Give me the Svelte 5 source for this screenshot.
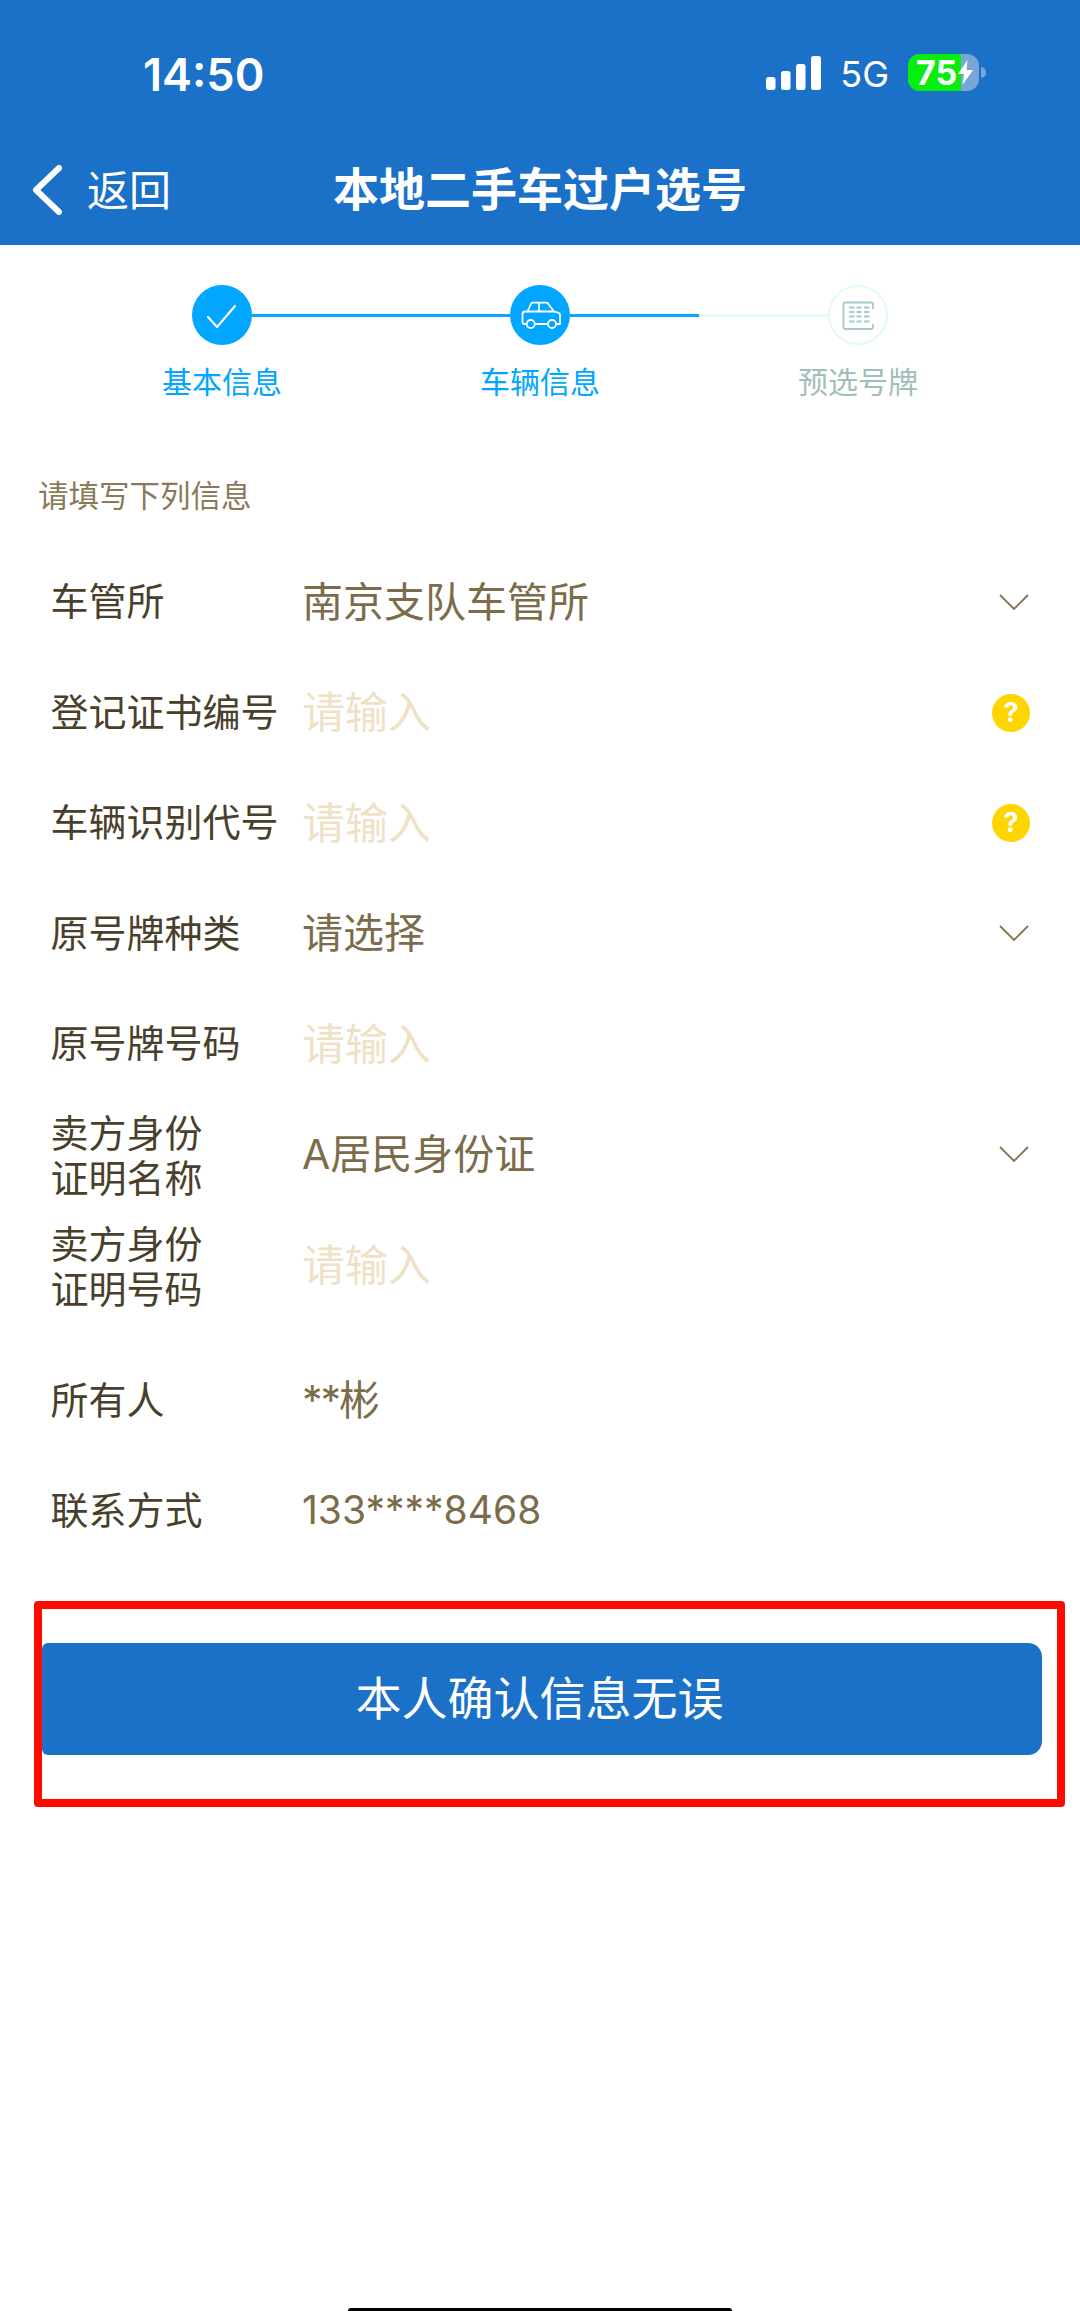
<script>
  const rows = [
    { label: ['车管所'], value: '南京支队车管所', icon: 'chevron' },
    { label: ['登记证书编号'], placeholder: '请输入', icon: 'help' },
    { label: ['车辆识别代号'], placeholder: '请输入', icon: 'help' },
    { label: ['原号牌种类'], value: '请选择', icon: 'chevron' },
    { label: ['原号牌号码'], placeholder: '请输入' },
    { label: ['卖方身份', '证明名称'], value: 'A居民身份证', icon: 'chevron' },
    { label: ['卖方身份', '证明号码'], placeholder: '请输入' },
    { label: ['所有人'], value: '**彬', kind: 'mask', spaced: true },
    { label: ['联系方式'], value: '133****8468', kind: 'num' }
  ];
</script>

<div class="page">
  <header>
    <div class="status">
      <span class="time">14:50</span>
      <div class="indicators">
        <svg class="signal" width="55" height="34" viewBox="0 0 55 34" fill="#fff">
          <rect x="0" y="21" width="9.5" height="13" rx="2.5" />
          <rect x="15" y="15" width="9.5" height="19" rx="2.5" />
          <rect x="30" y="8" width="9.5" height="26" rx="2.5" />
          <rect x="45" y="0" width="10" height="34" rx="2.5" />
        </svg>
        <span class="net">5G</span>
        <div class="battery">
          <div class="cell">
            <div class="charge">75</div>
            <svg class="bolt" width="15" height="25" viewBox="0 0 15 25" fill="#fff">
              <path d="M9.5 0 0 14h6L4.500 25 15 10H8.500z" />
            </svg>
          </div>
          <div class="nub"></div>
        </div>
      </div>
    </div>
    <div class="nav">
      <div class="back">
        <svg width="30" height="50" viewBox="0 0 30 50" fill="none" stroke="#fff" stroke-width="6" stroke-linecap="round" stroke-linejoin="round">
          <path d="M27 3 4 25l23 22" />
        </svg>
        <span>返回</span>
      </div>
      <h1>本地二手车过户选号</h1>
      <div></div>
    </div>
  </header>

  <div class="steps">
    <div class="step">
      <div class="head">
        <i class="line none"></i>
        <div class="dot on">
          <svg width="60" height="60" viewBox="0 0 60 60" fill="none" stroke="#fff" stroke-width="2.200" stroke-linecap="round" stroke-linejoin="round">
            <path d="M16 32l9 10 18-21" />
          </svg>
        </div>
        <i class="line blue"></i>
      </div>
      <span class="name">基本信息</span>
    </div>
    <div class="step">
      <div class="head">
        <i class="line blue"></i>
        <div class="dot on">
          <svg width="60" height="60" viewBox="0 0 60 60" fill="none" stroke="#fff" stroke-width="1.800" stroke-linecap="round" stroke-linejoin="round">
            <path d="M16.500 39H14a1.500 1.500 0 0 1-1.500-1.500V29a2.500 2.500 0 0 1 2.500-2.500h2.500L21 18.800a2 2 0 0 1 1.800-1.100h13.500a2 2 0 0 1 1.600.8L44 26.500l4 1.200a2.500 2.500 0 0 1 2 2.400V39h-3.500M25 39h12.500" />
            <path d="M17.500 26.500H44M29 17.700v8.800" />
            <circle cx="20.700" cy="39" r="4" />
            <circle cx="42" cy="39" r="4" />
          </svg>
        </div>
        <i class="line blue"></i>
      </div>
      <span class="name">车辆信息</span>
    </div>
    <div class="step todo">
      <div class="head">
        <i class="line pale"></i>
        <div class="dot off">
          <svg width="56" height="56" viewBox="0 0 56 56" fill="none" stroke="#a6c9cd" stroke-width="1.800">
            <path d="M43 22V17.500a2 2 0 0 0-2-2H15a2 2 0 0 0-1.500 1.500v23a2 2 0 0 0 2 2H41a2 2 0 0 0 2-2V37" />
            <path d="M19 20.500h5.500M26.500 20.500h5M34 20.500h5.500M19 25h5.500M26.500 25h5M34 25h5.500M19 29.500h5.500M26.500 29.500h5M34 29.500h5.500M19 34.500h5.500M26.500 34.500h5M34 34.500h5.500" />
          </svg>
        </div>
        <i class="line none"></i>
      </div>
      <span class="name">预选号牌</span>
    </div>
  </div>

  <p class="hint">请填写下列信息</p>

  <div class="form">
    {#each rows as row}
      <div class="row" class:spaced={row.spaced}>
        <div class="label" class:double={row.label.length > 1}>
          {#each row.label as line}
            <span>{line}</span>
          {/each}
        </div>
        {#if row.value}
          <div class="value {row.kind ?? ''}">{row.value}</div>
        {:else}
          <div class="value placeholder">{row.placeholder}</div>
        {/if}
        <div class="tail">
          {#if row.icon === 'chevron'}
            <svg width="30" height="17" viewBox="0 0 30 17" fill="none" stroke="#85754f" stroke-width="1.800">
              <path d="M1 1l14 14L29 1" />
            </svg>
          {:else if row.icon === 'help'}
            <span class="help">?</span>
          {/if}
        </div>
      </div>
    {/each}
  </div>

  <div class="marked">
    <button>本人确认信息无误</button>
  </div>

  <div class="home"></div>
</div>

<style>
  :global(body) {
    margin: 0;
    background: #fff;
  }
  .page {
    position: relative;
    height: 2311px;
    overflow: hidden;
    background: #fff;
    font-family: "Noto Sans CJK SC", "Noto Sans", sans-serif;
  }
  header {
    height: 245px;
    background: #1b70c8;
    color: #fff;
  }
  .status {
    height: 148px;
    padding: 0 94px 0 143px;
    display: flex;
    align-items: center;
    justify-content: space-between;
  }
  .time {
    font: 600 45px/1 Inter, sans-serif;
  }
  .indicators {
    display: flex;
    align-items: center;
  }
  .signal {
    display: block;
    margin-right: 19px;
    margin-bottom: 3px;
  }
  .net {
    font: 400 36px/1 Inter, sans-serif;
    margin-right: 19px;
  }
  .battery {
    display: flex;
    align-items: center;
    gap: 2px;
    margin-bottom: 3px;
  }
  .cell {
    position: relative;
    width: 71px;
    height: 37px;
    border-radius: 12px;
    background: #79a6d8;
  }
  .charge {
    width: 53px;
    height: 37px;
    padding-left: 8px;
    box-sizing: border-box;
    border-radius: 12px 0 0 12px;
    background: #07ee0c;
    font: 700 34px/37px Inter, sans-serif;
  }
  .bolt {
    position: absolute;
    left: 50px;
    top: 6px;
  }
  .nub {
    width: 5px;
    height: 11px;
    border-radius: 0 6px 6px 0;
    background: #79a6d8;
  }
  .nav {
    height: 84px;
    display: grid;
    grid-template-columns: 1fr auto 1fr;
    align-items: center;
  }
  .back {
    display: flex;
    align-items: center;
    gap: 25px;
    padding-left: 32px;
    font-size: 42px;
  }
  .back svg {
    display: block;
  }
  .back span {
    padding-bottom: 5px;
  }
  h1 {
    margin: 0;
    padding-bottom: 8px;
    font-size: 46px;
    font-weight: 700;
    line-height: 60px;
  }
  .steps {
    display: grid;
    grid-template-columns: repeat(3, 318px);
    padding: 40px 63px 0;
  }
  .step {
    display: flex;
    flex-direction: column;
    align-items: center;
    color: #00a6ff;
  }
  .step.todo {
    color: #9fbfba;
  }
  .head {
    width: 100%;
    display: flex;
    align-items: center;
  }
  .line {
    flex: 1;
    height: 3px;
  }
  .line.blue {
    background: #0aa6ff;
  }
  .line.pale {
    background: #e3faf5;
  }
  .dot {
    width: 60px;
    height: 60px;
    box-sizing: border-box;
    border-radius: 50%;
    flex: none;
  }
  .dot svg {
    display: block;
  }
  .dot.on {
    background: #00a6ff;
  }
  .dot.off {
    border: 2px solid #e3faf5;
  }
  .name {
    margin-top: 15px;
    margin-bottom: 5px;
    font-size: 30px;
    line-height: 40px;
  }
  .hint {
    margin: 69px 0 32px 38px;
    font-size: 30.5px;
    line-height: 40px;
    color: #8a7a58;
  }
  .row {
    height: 110.5px;
    display: flex;
    align-items: center;
    padding: 0 50px 0 50.5px;
  }
  .row.spaced {
    margin-top: 25px;
  }
  .label {
    width: 251.5px;
    flex: none;
    margin-bottom: 5px;
    font-size: 38px;
    line-height: 45px;
    color: #493f2b;
  }
  .label.double {
    margin-bottom: 1px;
  }
  .label span {
    display: block;
  }
  .value {
    flex: 1;
    margin-bottom: 5px;
    font-family: Inter, "Noto Sans CJK SC", sans-serif;
    font-size: 41px;
    color: #7c6c4a;
  }
  .value.num {
    font-size: 39px;
    margin-bottom: 1px;
  }
  .value.mask {
    letter-spacing: -2px;
  }
  .placeholder {
    font-size: 43px;
    color: #efe1c6;
  }
  .tail {
    width: 38px;
    margin-top: 2px;
    display: flex;
    justify-content: flex-end;
  }
  .tail svg {
    display: block;
    margin-right: 1px;
  }
  .help {
    width: 38px;
    height: 38px;
    border-radius: 50%;
    background: #ffd500;
    color: #fff;
    font: 700 27px/38px Inter, sans-serif;
    text-align: center;
  }
  .marked {
    margin: 35px 15px 0 34px;
    height: 206px;
    box-sizing: border-box;
    padding: 34px 15px 44px 0;
    border: 8px solid #ff0a00;
    border-radius: 4px;
  }
  button {
    display: block;
    width: 100%;
    height: 112px;
    padding: 0 5px 8px 0;
    border: 0;
    border-radius: 6px 14px 14px 6px;
    background: #1b70c8;
    color: #fff;
    font-family: inherit;
    font-size: 46px;
  }
  .home {
    position: absolute;
    left: 348px;
    bottom: 0;
    width: 384px;
    height: 3px;
    border-radius: 3px 3px 0 0;
    background: #000;
  }
</style>
